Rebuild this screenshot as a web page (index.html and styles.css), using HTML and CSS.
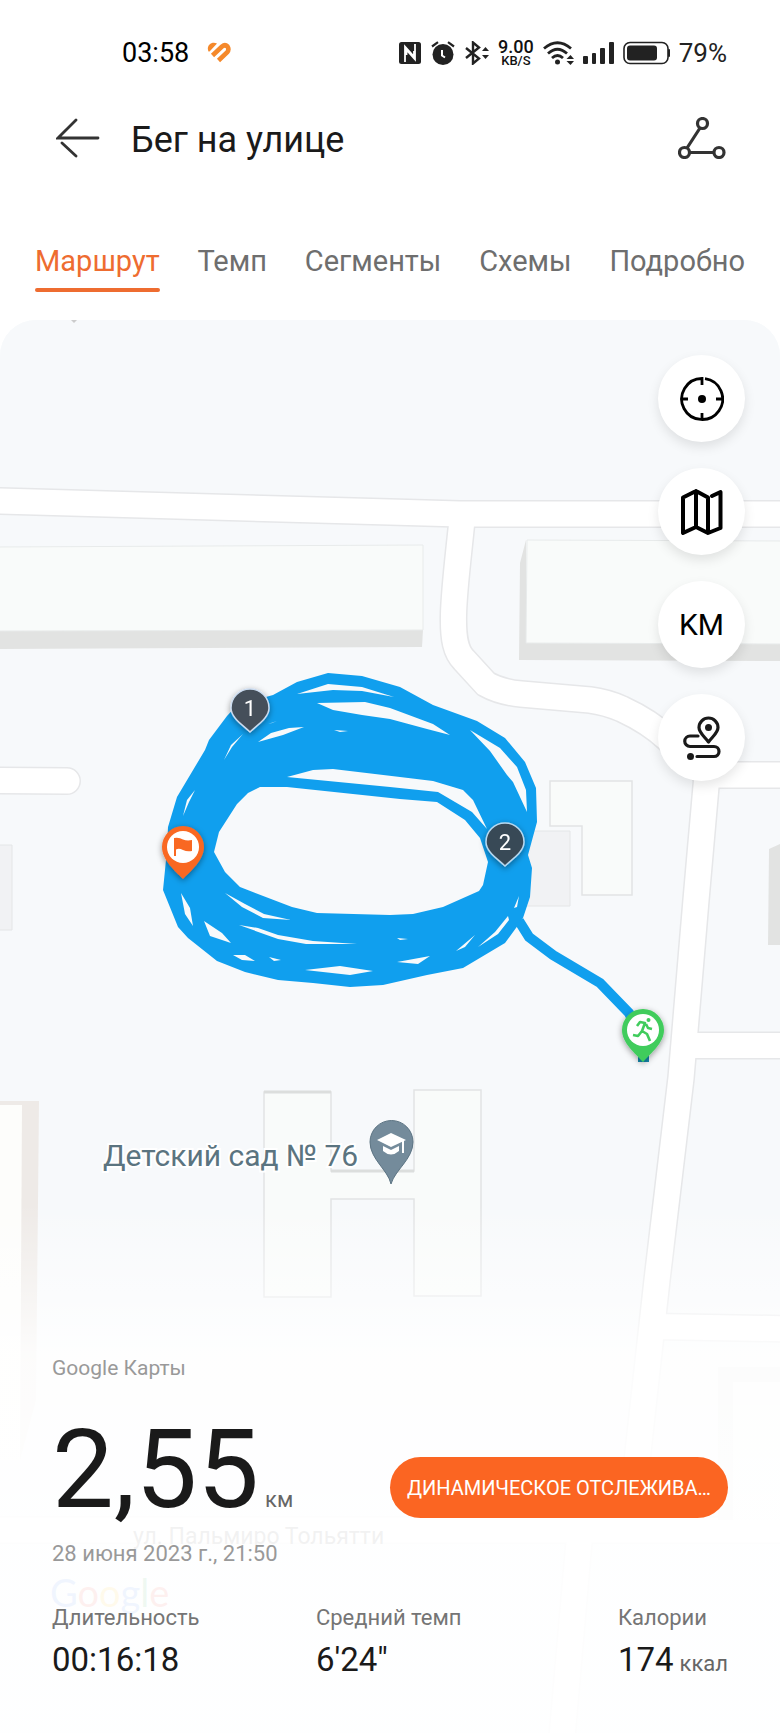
FILE: index.html
```html
<!DOCTYPE html>
<html lang="ru">
<head>
    <meta charset="UTF-8">
    <meta name="viewport" content="width=device-width, initial-scale=1.0">
    <title>Бег на улице</title>
    <link rel="stylesheet" href="styles.css">
</head>
<body>
    <div class="status-bar">
        <div class="status-left">
            <span class="status-text">03:58</span>
            <svg width="24" height="22" viewBox="0 0 24 22">
                <path d="M1.5 9.5C-1 4 4 -1 10 1.5L2.5 9.5Z" fill="#f5892b"/>
                <path d="M5.5 13.5L15 4.5Q18 2 20.5 4.5Q22.500 7.5 20 10.5L11.5 18.5" fill="none" stroke="#f5892b" stroke-width="4.6"/>
            </svg>
        </div>
        <div class="status-right">
            <svg width="22" height="22" viewBox="0 0 22 22">
                <rect width="22" height="22" rx="2.5" fill="#222"/>
                <path d="M6 20V4.5L15 14.5V9M16 2V17.5L7.5 8V13" fill="none" stroke="#fff" stroke-width="1.8"/>
            </svg>
            <svg width="26" height="24" viewBox="0 0 26 24">
                <circle cx="13" cy="13.5" r="10.5" fill="#222"/>
                <path d="M2 5.5L8 1.2M24 5.5L18 1.2" stroke="#222" stroke-width="2.2"/>
                <path d="M12 9V14.5L15 16.5" fill="none" stroke="#fff" stroke-width="2"/>
            </svg>
            <svg width="24" height="24" viewBox="0 0 24 24">
                <path d="M1 7L14 17.5L8 22.5V1.5L14 6.5L1 17" fill="none" stroke="#222" stroke-width="2.4"/>
                <path d="M17 10L20.5 6L24 10ZM17 14L20.5 18L24 14Z" fill="#222"/>
            </svg>
            <div class="net-speed"><span>9.00</span><small>KB/S</small></div>
            <svg width="31" height="24" viewBox="0 0 31 24">
                <path d="M1 7.5Q14.5 -4 28 7.5M5 12.5Q14.5 4 24 12.5M9 17Q14.5 12 20 17" fill="none" stroke="#222" stroke-width="2.8"/>
                <circle cx="14.500" cy="21" r="2.5" fill="#222"/>
                <path d="M23.5 18L27.5 14L31 18ZM23.5 20L27.5 24L31 20Z" fill="#222"/>
            </svg>
            <svg width="31" height="22" viewBox="0 0 31 22" fill="#222">
                <rect y="14" width="5" height="8" rx="1"/>
                <rect x="9" y="11" width="4" height="11" rx="1"/>
                <rect x="17" y="6" width="5" height="16" rx="1"/>
                <rect x="26" width="5" height="22" rx="1"/>
            </svg>
            <svg width="47" height="24" viewBox="0 0 47 24">
                <rect x="1" y="1.5" width="44" height="21" rx="6" fill="none" stroke="#222" stroke-width="1.6"/>
                <rect x="4" y="4.5" width="30" height="15" rx="3" fill="#222"/>
                <rect x="45" y="8" width="2" height="8" rx="1" fill="#222"/>
            </svg>
            <span class="status-text battery-text">79%</span>
        </div>
    </div>

    <header class="header">
        <button class="icon-button" aria-label="Назад">
            <svg width="44" height="40" viewBox="0 0 44 40" fill="none" stroke="#333" stroke-width="2.8" stroke-linecap="round">
                <path d="M42 20H2L20 2M6 25L20 38"/>
            </svg>
        </button>
        <h1>Бег на улице</h1>
        <button class="icon-button" aria-label="Поделиться">
            <svg width="48" height="42" viewBox="0 0 48 42" fill="none" stroke="#333" stroke-width="3.2">
                <circle cx="24.5" cy="6.5" r="5"/>
                <circle cx="6.5" cy="35.5" r="5"/>
                <circle cx="41" cy="35.5" r="5"/>
                <path d="M22 11L9 31M12 35.5H36"/>
            </svg>
        </button>
    </header>

    <nav class="tabs">
        <a href="#" class="tab active">Маршрут</a>
        <a href="#" class="tab">Темп</a>
        <a href="#" class="tab">Сегменты</a>
        <a href="#" class="tab">Схемы</a>
        <a href="#" class="tab">Подробно</a>
    </nav>

    <main class="map">
        <svg class="map-canvas" viewBox="0 320 780 1413" preserveAspectRatio="xMidYMin slice">
            <defs>
                <g id="roads">
                    <path d="M-20 500.5L0 501L390 512L460 514H800"/>
                    <path d="M462 520C458 560 454 590 453.5 615C453 640 456 652 464 660L486 684Q500 692 521 694L590 700Q606 702 622 709Q650 722 668 739L707 775"/>
                    <path d="M700 775H800M707 775L696 900L681 1078L657 1280L636 1470M686 1045.5H800M655 1326.5L800 1329"/>
                    <path d="M-20 780.5L67 781" stroke-linecap="round"/>
                    <path d="M-20 1530H800M580 1530L560 1760"/>
                </g>
                <filter id="shadow" x="-30%" y="-30%" width="160%" height="160%">
                    <feDropShadow dx="0" dy="2" stdDeviation="3" flood-color="#000" flood-opacity="0.4"/>
                </filter>
            </defs>

            <rect y="320" width="780" height="1413" fill="#f7f9fb"/>
            <path d="M71 320L74 323L77 320Z" fill="#ccc"/>

            <!-- roads: border first, then the white surface -->
            <use href="#roads" fill="none" stroke="#e6e7e9" stroke-width="28"/>
            <use href="#roads" fill="none" stroke="#fff" stroke-width="25"/>

            <!-- buildings -->
            <path d="M0 631L423 630L422 647L0 649Z" fill="#e2e3e2"/>
            <path d="M-2 547L423 545V630L-2 631Z" fill="#f9fbfa" stroke="#e8ebeb"/>
            <path d="M526 540L520 563L519 660L780 661V643H526Z" fill="#e2e3e2"/>
            <path d="M527 540L782 541V644L526 643Z" fill="#f9fbfa" stroke="#e8ebeb"/>
            <path d="M500 831H570V906H500Z" fill="#f1f2f4" stroke="#e4e6e7"/>
            <path d="M550 781H632V895H582V826H550Z" fill="#f9fbfa" stroke="#e2e4e5" stroke-width="1.5"/>
            <path d="M-2 845H12V930H-2Z" fill="#f1f2f4" stroke="#e4e6e7"/>
            <path d="M769 849L780 844V945H768Z" fill="#e2e3e2"/>
            <path d="M264 1092H331V1171H414V1090H481V1296H414V1199H331V1297H264Z" fill="#f9fbfa" stroke="#e2e4e5" stroke-width="1.5"/>
            <path d="M264 1092H331M331 1171H414" stroke="#dcdedd" stroke-width="3"/>
            <path d="M0 1101H39L36 1400L20 1460H0Z" fill="#eeeae7"/>
            <path d="M0 1105H22L20 1460H0Z" fill="#fdfdfb"/>
            <path d="M718 1367H780V1382H733V1520H718Z" fill="#e9ebea"/>
            <path d="M733 1382H780V1520H733Z" fill="#f9fbfa"/>

            <!-- track -->
            <path fill="#109fee" d="M273 695L297 682L328 673L362 676L400 687L433 705L477 721L505 738L525 762L536 788L537 822L528 855L532 868L530 897L523 918L516 928L505 943L463 968L427 975L383 985L350 987L313 983L278 980L245 972L217 961L188 938L178 927L163 890L167 850L168 827L177 797L205 750L209 740L227 716L237 705Z"/>
            <path fill="#f7f9fb" d="M260 787L287 787L400 799L437 802L465 820L480 838L488 862L483 885L479 891L443 907L413 914L390 915L317 913L292 907L240 887L225 872L214 852L219 832L237 804L248 793Z"/>
            <path fill="#f7f9fb" d="M287 777L313 770L333 769L400 777L433 781L463 790L473 800L487 829L472 812L438 792L390 787Z
                M297 694L328 684L362 687L394 697L362 691L333 690Z
                M317 703L365 702L390 708L433 724L450 735L427 729L390 719L362 715L333 710Z
                M470 730L500 748L517 767L526 790L527 812L513 782L507 775L490 751Z
                M258 742L271 733L289 728L304 727L283 735Z
                M334 730L348 731L340 732Z M268 724L277 721L272 723Z
                M224 760L231 745L243 734L232 747Z M183 816L187 800L195 790L189 802Z
                M181 893L190 908L193 926L185 914Z
                M204 921L222 933L231 943L210 936Z
                M225 893L245 904L264 914L291 920L263 918L242 907Z
                M239 925L258 928L278 935L313 941L357 944L306 944L278 939Z
                M233 955L245 955L255 961L242 960Z M269 957L281 960L274 961Z
                M305 970L340 966L373 971L350 975Z
                M397 962L430 956L418 964Z M397 938L408 939L400 940Z
                M456 951L475 935L465 947Z M478 947L495 932L508 916L509 920L498 934Z M514 908L519 896L517 907Z"/>
            <path d="M519 921L529 937L553 955L600 983L629 1013L640 1036" fill="none" stroke="#109fee" stroke-width="10"/>
            <rect x="638" y="1055" width="11" height="7" fill="#168bb0"/>

            <!-- kilometre marks -->
            <g class="km-pin" filter="url(#shadow)">
                <path d="M250 732C243 725 231 718 231 708A19 19 0 0 1 269 708C269 718 257 725 250 732Z" fill="#45505a" stroke="#ccdcf0" stroke-width="1.5"/>
                <text x="250" y="716">1</text>
            </g>
            <g class="km-pin" filter="url(#shadow)">
                <path d="M505 866C498 859 486 852 486 842A19 19 0 0 1 524 842C524 852 512 859 505 866Z" fill="#374a57" stroke="#b9d8ef" stroke-width="1.5"/>
                <text x="505" y="850">2</text>
            </g>

            <!-- finish -->
            <g filter="url(#shadow)">
                <path d="M183 879C175 871 162 860 162 847A21 21 0 0 1 204 847C204 860 191 871 183 879Z" fill="#f96822"/>
            </g>
            <circle cx="183" cy="847" r="16" fill="#fff"/>
            <path d="M174 838Q179 837 183 839.5Q187 841 192 840V851Q187 852 183 850Q179 848 176 849.5V856H174Z" fill="#f96822"/>

            <!-- start -->
            <g filter="url(#shadow)">
                <path d="M643 1062C635 1053 622 1043 622 1030A21 21 0 0 1 664 1030C664 1043 651 1053 643 1062Z" fill="#40cc5c"/>
            </g>
            <circle cx="643" cy="1030" r="16" fill="#fff"/>
            <circle cx="648.5" cy="1020" r="2" fill="#40cc5c"/>
            <path d="M637 1026L640 1022L645 1023L642 1031L647 1034L650 1041M646 1024L648 1028L652 1029M642 1031L638 1036L633 1035" fill="none" stroke="#40cc5c" stroke-width="2.6" stroke-linejoin="round"/>

            <!-- kindergarten -->
            <text class="place-name" x="103" y="1166">Детский сад № 76</text>
            <path d="M391 1184C388 1170 370 1159 370 1142A21.500 21.500 0 0 1 413 1142C413 1159 395 1170 391 1184Z" fill="#748b9b" stroke="#5c7483"/>
            <path d="M377 1140L391 1133L406 1140L391 1147Z" fill="#fff"/>
            <path d="M383 1146L391 1150L399 1146V1151Q391 1158 383 1151ZM402 1141H404V1153H402Z" fill="#fff"/>

            <text class="street-name" x="133" y="1544">ул. Пальмиро Тольятти</text>
            <text class="map-logo" x="50" y="1607"><tspan fill="#4285f4">G</tspan><tspan fill="#ea4335">o</tspan><tspan fill="#fbbc05">o</tspan><tspan fill="#4285f4">g</tspan><tspan fill="#34a853">l</tspan><tspan fill="#ea4335">e</tspan></text>
        </svg>

        <div class="map-tools">
            <button class="tool" aria-label="Центрировать">
                <svg width="44" height="44" viewBox="0 0 44 44" fill="none" stroke="#000" stroke-width="2.8">
                    <path d="M22 8V1.5A20.500 20.500 0 1 0 25 1.7M22 36V42M1 22H8M36 22H43"/>
                    <circle cx="22" cy="22" r="4" fill="#000" stroke="none"/>
                </svg>
            </button>
            <button class="tool" aria-label="Тип карты">
                <svg width="42" height="46" viewBox="0 0 42 46" fill="none" stroke="#000" stroke-width="4" stroke-linejoin="round" stroke-linecap="round">
                    <path d="M31 7L39.5 3V39L27 44L15 38L2 44V8.5L15 2L27 8.5V44M15 2V38"/>
                </svg>
            </button>
            <button class="tool tool-km">KM</button>
            <button class="tool" aria-label="Маршрут">
                <svg width="38" height="44" viewBox="0 0 38 44" fill="none" stroke="#1a1a1a" stroke-width="3.2" stroke-linecap="round">
                    <path d="M25.5 26C22 21 16 17 16 11.5A9.500 9.500 0 0 1 35 11.5C35 17 29 21 25.5 26Z" stroke-linejoin="round"/>
                    <circle cx="25.5" cy="11.5" r="3.5" fill="#1a1a1a" stroke="none"/>
                    <path d="M15 20H7A5 5 0 0 0 7 30.5H31A5 5 0 0 1 31 40.5H14"/>
                    <circle cx="7.5" cy="40.5" r="3.5" fill="#1a1a1a" stroke="none"/>
                </svg>
            </button>
        </div>

        <section class="summary">
            <p class="map-source">Google Карты</p>
            <div class="distance-row">
                <p class="distance">2,55<span class="unit">км</span></p>
                <button class="track-button">ДИНАМИЧЕСКОЕ ОТСЛЕЖИВА…</button>
            </div>
            <p class="date">28 июня 2023 г., 21:50</p>
            <dl class="stats">
                <div>
                    <dt>Длительность</dt>
                    <dd>00:16:18</dd>
                </div>
                <div>
                    <dt>Средний темп</dt>
                    <dd>6'24"</dd>
                </div>
                <div>
                    <dt>Калории</dt>
                    <dd>174<span class="unit">ккал</span></dd>
                </div>
            </dl>
        </section>
    </main>
</body>
</html>
```
FILE: styles.css
```css
* {
    margin: 0;
    padding: 0;
    box-sizing: border-box;
}

body {
    font-family: Roboto, "Noto Sans", sans-serif;
    background: #fff;
    color: #1a1a1a;
    min-height: 100vh;
    display: flex;
    flex-direction: column;
}

button {
    border: none;
    background: none;
    font-family: inherit;
    cursor: pointer;
}

svg {
    display: block;
    flex-shrink: 0;
}

/* Status bar */
.status-bar {
    display: flex;
    justify-content: space-between;
    align-items: center;
    padding: 34px 53px 0 122px;
    height: 72px;
}

.status-left {
    display: flex;
    align-items: center;
    gap: 18px;
}

.status-right {
    display: flex;
    align-items: center;
    gap: 9px;
}

.status-text {
    font-size: 27px;
    line-height: 32px;
    color: #000;
}

.battery-text {
    font-size: 26px;
    color: #222;
}

.net-speed {
    display: flex;
    flex-direction: column;
    align-items: center;
    font-size: 18px;
    line-height: 16px;
    font-weight: 500;
    color: #111;
}

.net-speed small {
    font-size: 13px;
    line-height: 12px;
}

/* Header */
.header {
    display: flex;
    align-items: center;
    padding: 0 54px 0 56px;
    height: 132px;
}

.header h1 {
    flex: 1;
    margin-left: 31px;
    padding-top: 4px;
    font-size: 36px;
    line-height: 44px;
    font-weight: 400;
}

/* Tabs */
.tabs {
    display: flex;
    justify-content: space-between;
    padding: 40px 35px 28px;
}

.tab {
    position: relative;
    padding-bottom: 14px;
    font-size: 29px;
    line-height: 34px;
    color: #6e6e6e;
    text-decoration: none;
}

.tab.active {
    color: #ee6c30;
}

.tab.active::after {
    content: '';
    position: absolute;
    left: 0;
    right: 0;
    bottom: 0;
    height: 4px;
    border-radius: 2px;
    background: #ee6c30;
}

/* Map */
.map {
    position: relative;
    flex: 1;
    display: flex;
    flex-direction: column;
    justify-content: space-between;
    overflow: hidden;
    border-radius: 36px 36px 0 0;
    background: #f7f9fb;
}

.map-canvas {
    position: absolute;
    inset: 0;
    width: 100%;
    height: 100%;
}

.km-pin text {
    font-size: 22px;
    fill: #fff;
    text-anchor: middle;
}

.place-name {
    font-size: 30px;
    fill: #5b7480;
    stroke: #fff;
    stroke-width: 4px;
    paint-order: stroke;
}

.street-name {
    font-size: 23px;
    fill: #555;
}

.map-logo {
    font-family: Lato, sans-serif;
    font-size: 38px;
}

.map-tools {
    position: relative;
    display: flex;
    flex-direction: column;
    align-items: flex-end;
    gap: 26px;
    padding: 35px 35px 0;
}

.tool {
    display: flex;
    align-items: center;
    justify-content: center;
    width: 87px;
    height: 87px;
    border-radius: 50%;
    background: #fff;
    box-shadow: 0 5px 12px rgba(0, 0, 0, 0.1);
}

.tool-km {
    font-size: 30px;
    color: #000;
}

/* Summary over the bottom of the map */
.summary {
    position: relative;
    padding: 150px 52px 53px;
    background: linear-gradient(rgba(255, 255, 255, 0), rgba(255, 255, 255, 0.85) 150px, rgba(255, 255, 255, 0.92) 300px);
}

.map-source {
    font-size: 21px;
    line-height: 28px;
    color: #999;
}

.distance-row {
    display: flex;
    align-items: flex-end;
    justify-content: space-between;
    margin-top: 18px;
}

.distance {
    font-size: 110px;
    line-height: 140px;
    white-space: nowrap;
}

.unit {
    margin-left: 6px;
    font-size: 22px;
    line-height: 28px;
    color: #666;
}

.track-button {
    width: 50%;
    height: 61px;
    margin-bottom: 22px;
    border-radius: 31px;
    background: #fb6522;
    color: #fff;
    font-size: 20px;
    white-space: nowrap;
}

.date {
    font-size: 22px;
    line-height: 28px;
    color: #999;
}

.stats {
    display: grid;
    grid-template-columns: 264fr 302fr auto;
    margin-top: 36px;
}

.stats dt {
    font-size: 22px;
    line-height: 28px;
    color: #757575;
}

.stats dd {
    margin-top: 8px;
    font-size: 33px;
    line-height: 40px;
    white-space: nowrap;
}
```
